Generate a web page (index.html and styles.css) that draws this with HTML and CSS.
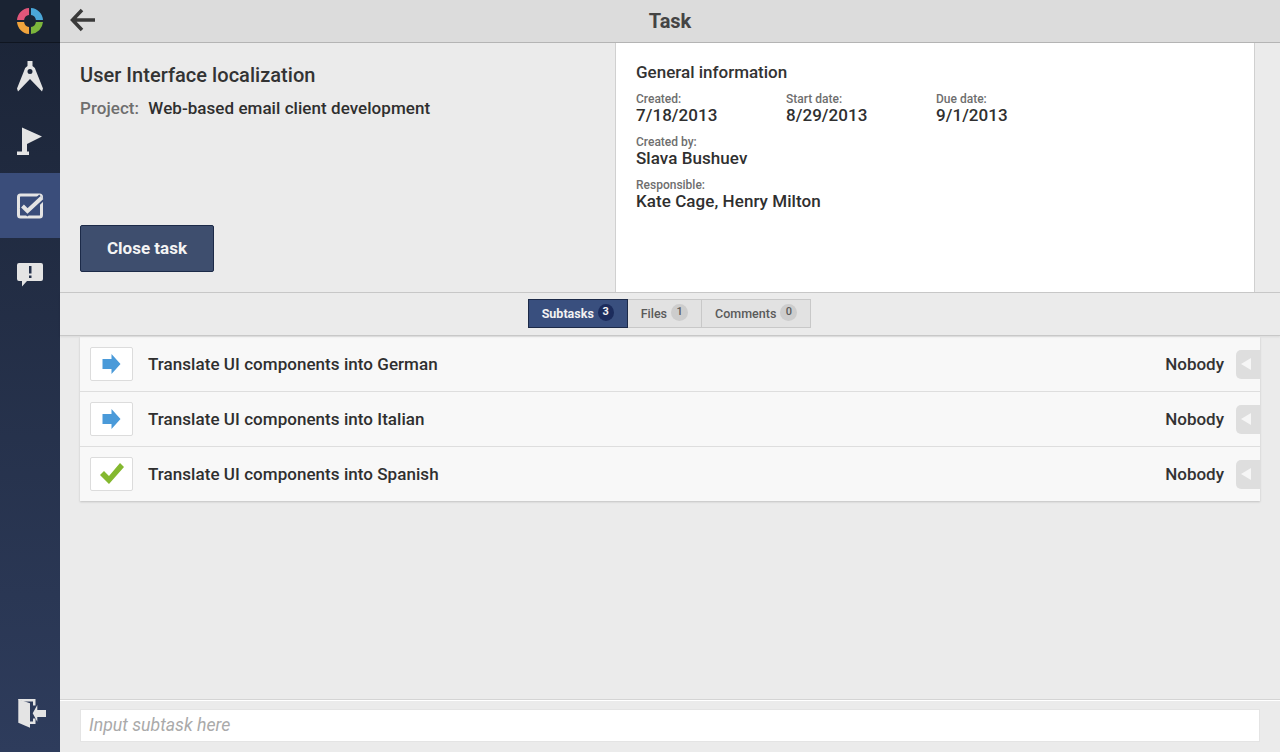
FILE: index.html
```html
<!DOCTYPE html>
<html lang="en">
<head>
    <meta charset="UTF-8">
    <title>Task</title>
    <link rel="stylesheet" href="styles.css">
</head>
<body>

<div class="app">
    <nav class="sidebar">
        <div class="logo">
            <svg width="28" height="28" viewBox="0 0 28 28">
                <path d="M1 13A13 13 0 0 1 13 1V8A6 6 0 0 0 8.100 13Z" fill="#e0567a"/>
                <path d="M15 1A13 13 0 0 1 27 13H19.900A6 6 0 0 0 15 8Z" fill="#4aa6d8"/>
                <path d="M27 15A13 13 0 0 1 15 27V20A6 6 0 0 0 19.900 15Z" fill="#7cb53c"/>
                <path d="M13 27A13 13 0 0 1 1 15H8.100A6 6 0 0 0 13 20Z" fill="#f0a33c"/>
            </svg>
        </div>
        <a class="nav-item">
            <svg class="compass-icon" width="28" height="34" viewBox="0 0 28 34">
                <path fill-rule="evenodd" d="M11.500 1H16.500V6A6.500 6.500 0 0 1 20 11L27 28.500 26 31.500 14 19 2 31.500 1 28.500 8 11A6.500 6.500 0 0 1 11.500 6ZM14 9A2.500 2.500 0 1 0 14 14 2.500 2.500 0 1 0 14 9Z" fill="#e4e4e4"/>
            </svg>
        </a>
        <a class="nav-item">
            <svg width="28" height="32" viewBox="0 0 28 32">
                <path d="M6 2.500L26 11.500 11 19V26.500H13V30H1V26.500H6Z" fill="#e4e4e4"/>
            </svg>
        </a>
        <a class="nav-item active">
            <svg width="28" height="28" viewBox="0 0 28 28">
                <rect x="2.500" y="3" width="23" height="22" rx="2" fill="none" stroke="#e4e4e4" stroke-width="3"/>
                <path d="M6.500 14L11.500 19 26 5.500" fill="none" stroke="#3a4d7a" stroke-width="8"/>
                <path d="M6.500 14L11.500 19 26 5.500" fill="none" stroke="#e4e4e4" stroke-width="4"/>
            </svg>
        </a>
        <a class="nav-item">
            <svg class="alert-icon" width="28" height="26" viewBox="0 0 28 26">
                <path d="M3 1H25A2 2 0 0 1 27 3V17A2 2 0 0 1 25 19H11L6 24.500V19H3A2 2 0 0 1 1 17V3A2 2 0 0 1 3 1Z" fill="#e4e4e4"/>
                <path d="M13 4H15.500V11.500H13ZM13 13.500H15.500V16H13Z" fill="#24304a"/>
            </svg>
        </a>
        <a class="nav-item logout">
            <svg width="30" height="32" viewBox="0 0 30 32">
                <path d="M2.300 2.300L14 6.300V30.700L2.300 25.700Z" fill="#e4e4e4"/>
                <path d="M2.300 2H19.500V8.500H17V4.500H8L2.300 3ZM14 24.500H17V21.500H19.500V27H14Z" fill="#e4e4e4"/>
                <path d="M16.700 16.300L21.300 8V13H30V20H21.300V24.700Z" fill="#e4e4e4"/>
            </svg>
        </a>
    </nav>

    <main class="content">
        <header class="topbar">
            <svg class="back" width="26" height="24" viewBox="0 0 26 24">
                <path d="M12 2L2.500 12 12 22M3 12H25" fill="none" stroke="#3a3a3a" stroke-width="3.500"/>
            </svg>
            <h1>Task</h1>
        </header>

        <section class="details">
            <div class="summary">
                <div>
                    <h2>User Interface localization</h2>
                    <div class="project"><span>Project:</span> Web-based email client development</div>
                </div>
                <button class="close-btn">Close task</button>
            </div>
            <div class="info">
                <h3>General information</h3>
                <div class="dates">
                    <div class="field"><label>Created:</label><b>7/18/2013</b></div>
                    <div class="field"><label>Start date:</label><b>8/29/2013</b></div>
                    <div class="field"><label>Due date:</label><b>9/1/2013</b></div>
                </div>
                <div class="field"><label>Created by:</label><b>Slava Bushuev</b></div>
                <div class="field"><label>Responsible:</label><b>Kate Cage, Henry Milton</b></div>
            </div>
            <div class="gutter"></div>
        </section>

        <div class="tabbar">
            <div class="tabs">
                <div class="tab selected">Subtasks <i>3</i></div>
                <div class="tab">Files <i>1</i></div>
                <div class="tab">Comments <i>0</i></div>
            </div>
        </div>

        <div class="list-area">
            <ul class="subtasks">
                <li>
                    <span class="status">
                        <svg width="20" height="22" viewBox="0 0 20 22"><path d="M.5 6H9.500V1L18.500 11 9.500 21V16H.5Z" fill="#4a9ad9"/></svg>
                    </span>
                    <span class="name">Translate UI components into German</span>
                    <span class="owner">Nobody</span>
                    <span class="toggle"></span>
                </li>
                <li>
                    <span class="status">
                        <svg width="20" height="22" viewBox="0 0 20 22"><path d="M.5 6H9.500V1L18.500 11 9.500 21V16H.5Z" fill="#4a9ad9"/></svg>
                    </span>
                    <span class="name">Translate UI components into Italian</span>
                    <span class="owner">Nobody</span>
                    <span class="toggle"></span>
                </li>
                <li>
                    <span class="status">
                        <svg width="24" height="22" viewBox="0 0 24 22"><path d="M0 12L4 8 9 13 20 0 24 4 9 21Z" fill="#84b82f"/></svg>
                    </span>
                    <span class="name">Translate UI components into Spanish</span>
                    <span class="owner">Nobody</span>
                    <span class="toggle"></span>
                </li>
            </ul>
        </div>

        <footer class="footer">
            <input type="text" placeholder="Input subtask here">
        </footer>
    </main>
</div>

</body>
</html>
```

FILE: styles.css
```css
* {
    box-sizing: border-box;
}
body {
    margin: 0;
    font-family: Roboto, "Liberation Sans", sans-serif;
    color: #333;
    background-color: #ebebeb;
}
.app {
    display: flex;
    height: 752px;
    overflow: hidden;
}

/* sidebar */
.sidebar {
    width: 60px;
    flex: none;
    display: flex;
    flex-direction: column;
    background: linear-gradient(#1b2436, #2e3c5c);
}
.logo {
    height: 43px;
    flex: none;
    display: flex;
    align-items: center;
    justify-content: center;
    padding-bottom: 1px;
    background-color: #1a2333;
    border-bottom: 1px solid #0f1520;
}
.nav-item {
    height: 65px;
    flex: none;
    display: flex;
    align-items: center;
    justify-content: center;
}
.nav-item.active {
    background-color: #3a4d7a;
}
.compass-icon {
    margin-top: 3px;
}
.alert-icon {
    margin-top: 9px;
}
.logout {
    margin-top: auto;
    height: 56px;
    padding: 0 0 22px 2px;
}

/* main column */
.content {
    flex: 1;
    min-width: 0;
    display: flex;
    flex-direction: column;
}
.topbar {
    height: 43px;
    flex: none;
    position: relative;
    display: flex;
    align-items: center;
    justify-content: center;
    background-color: #dcdcdc;
    border-bottom: 1px solid #b4b4b4;
}
.topbar h1 {
    margin: 0;
    font-size: 20px;
    font-weight: 700;
    color: #444;
}
.back {
    position: absolute;
    left: 10px;
    top: 8px;
}

/* task details */
.details {
    height: 250px;
    flex: none;
    display: flex;
    border-bottom: 1px solid #c8c8c8;
}
.summary {
    width: 556px;
    flex: none;
    padding: 20px;
    display: flex;
    flex-direction: column;
    justify-content: space-between;
    align-items: flex-start;
    border-right: 1px solid #d0d0d0;
}
.summary h2 {
    margin: 0 0 11px;
    font-size: 20px;
    line-height: 24px;
    font-weight: 500;
    letter-spacing: .04px;
    color: #333;
}
.project {
    font-size: 17px;
    line-height: 20px;
    font-weight: 500;
    letter-spacing: .05px;
    color: #2f2f2f;
}
.project span {
    color: #6e6e6e;
    margin-right: 5px;
}
.close-btn {
    width: 134px;
    height: 47px;
    padding: 0 0 2px;
    font-family: inherit;
    font-size: 17px;
    font-weight: 700;
    color: #f4f4f4;
    background-color: #3e4e6e;
    border: 1px solid #1c2a48;
    border-radius: 2px;
}
.info {
    flex: 1;
    padding: 19px 20px 0;
    background-color: #fff;
    border-right: 1px solid #d0d0d0;
}
.info h3 {
    margin: 0 0 10px;
    font-size: 17px;
    line-height: 20px;
    font-weight: 500;
    color: #333;
}
.gutter {
    width: 25px;
    flex: none;
}
.dates {
    display: flex;
}
.dates .field {
    width: 150px;
}
.field {
    margin-bottom: 11px;
}
.field label {
    display: block;
    font-size: 12px;
    line-height: 14px;
    font-weight: 500;
    color: #6e6e6e;
}
.field b {
    display: block;
    font-size: 17px;
    line-height: 18px;
    font-weight: 500;
    letter-spacing: .06px;
    color: #2f2f2f;
}

/* tabs */
.tabbar {
    height: 43px;
    flex: none;
    display: flex;
    justify-content: center;
    padding-top: 6px;
    border-bottom: 1px solid #c8c8c8;
    box-shadow: 0 1px 2px rgba(0,0,0,0.08);
    position: relative;
}
.tabs {
    display: flex;
    height: 29px;
    margin-right: 1px;
}
.tab {
    display: flex;
    align-items: center;
    gap: 4px;
    padding: 0 13px;
    font-size: 12.500px;
    font-weight: 500;
    color: #5a5a5a;
    background-color: #e2e2e2;
    border: 1px solid #c8c8c8;
    border-left: none;
}
.tab i {
    width: 17px;
    height: 17px;
    margin-top: -3px;
    border-radius: 50%;
    font-style: normal;
    font-size: 11px;
    line-height: 16px;
    text-align: center;
    background-color: #cdcdcd;
}
.tab.selected {
    width: 100px;
    font-weight: 700;
    color: #f2f2f2;
    background-color: #394f7e;
    border: 1px solid #1c2a48;
}
.tab.selected i {
    color: #f2f2f2;
    background-color: #1c2c5c;
}

/* subtasks */
.list-area {
    flex: 1;
    padding: 1px 20px 0;
}
.subtasks {
    margin: 0;
    padding: 0;
    list-style: none;
    background-color: #f8f8f8;
    box-shadow: 0 1px 2px rgba(0,0,0,0.18);
}
.subtasks li {
    height: 55px;
    display: flex;
    align-items: center;
    padding-left: 10px;
    border-bottom: 1px solid #dedede;
}
.subtasks li:last-child {
    height: 54px;
    border-bottom: none;
}
.status {
    width: 43px;
    height: 34px;
    flex: none;
    display: flex;
    align-items: center;
    justify-content: center;
    background-color: #fff;
    border: 1px solid #dcdcdc;
    border-radius: 2px;
}
.name {
    flex: 1;
    margin-left: 15px;
    font-size: 17px;
    font-weight: 500;
    letter-spacing: .05px;
    color: #2f2f2f;
}
.owner {
    font-size: 17px;
    font-weight: 500;
    color: #333;
    margin-right: 12px;
}
.toggle {
    width: 24px;
    height: 29px;
    flex: none;
    display: flex;
    align-items: center;
    padding-left: 5px;
    background-color: #dedede;
    border-radius: 5px 0 0 5px;
}
.toggle::before {
    content: "";
    border-style: solid;
    border-width: 6px 10px 6px 0;
    border-color: transparent #f6f6f6 transparent transparent;
}

/* input row */
.footer {
    height: 53px;
    flex: none;
    padding: 9px 20px 0;
    border-top: 1px solid #d4d4d4;
    box-shadow: inset 0 1px 0 #fff;
}
.footer input {
    display: block;
    width: 100%;
    height: 33px;
    padding: 0 8px 2px;
    font-family: inherit;
    font-size: 17.700px;
    font-style: italic;
    background-color: #fff;
    border: 1px solid #e4e4e4;
}
.footer input::placeholder {
    color: #aaa;
}
```
